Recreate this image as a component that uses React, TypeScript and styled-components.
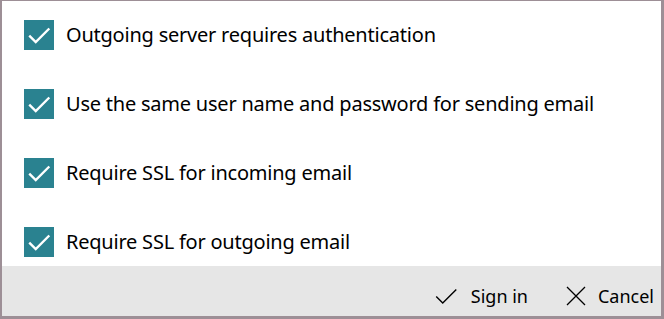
import React from "react"
import styled, { createGlobalStyle } from "styled-components"

const Global = createGlobalStyle`
    html, body {
        margin: 0;
        padding: 0;
        background: #fff;
    }
    body {
        font-family: "Segoe UI", "Noto Sans", "Open Sans", sans-serif;
    }
`

const Frame = styled.div`
    box-sizing: border-box;
    width: 664px;
    height: 319px;
    border-style: solid;
    border-color: #9d8f96;
    border-width: 1px 3px 3px 2px;
    display: flex;
    flex-direction: column;
    background: #fff;
`

const Options = styled.div`
    flex: 1;
    display: flex;
    flex-direction: column;
    padding: 19px 0 0 22px;
    gap: 39px;
`

const Row = styled.label`
    display: flex;
    align-items: center;
    gap: 12px;
    height: 30px;
    color: #000;
    font-size: 20px;
    letter-spacing: -0.22px;
`

const Text = styled.span`
    margin-top: -2px;
`

const Box = styled.span`
    width: 30px;
    height: 30px;
    background: #2a8290;
    display: flex;
    align-items: center;
    justify-content: center;
`

const Footer = styled.div`
    height: 50px;
    background: #e6e6e6;
    display: flex;
    align-items: center;
    justify-content: flex-end;
    padding: 0 7px 0 0;
    gap: 38px;
`

const Action = styled.button`
    appearance: none;
    border: 0;
    background: transparent;
    padding: 0;
    display: flex;
    align-items: center;
    gap: 12px;
    font-family: inherit;
    font-size: 18px;
    color: #000;
    cursor: pointer;
    margin-top: 9px;
`

const Tick = ({ color, size, weight }: { color: string; size: number; weight: number }) => (
    <svg width={size} height={size} viewBox="0 0 24 24" fill="none">
        <path d="M3 12.5 L9 18.5 L21.5 6" stroke={color} strokeWidth={weight} />
    </svg>
)

const Cross = () => (
    <svg width={20} height={20} viewBox="0 0 20 20" fill="none">
        <path d="M1 1 L19 19 M19 1 L1 19" stroke="#000" strokeWidth={1.3} />
    </svg>
)

const items = [
    "Outgoing server requires authentication",
    "Use the same user name and password for sending email",
    "Require SSL for incoming email",
    "Require SSL for outgoing email",
]

const App = () => (
    <>
        <Global />
        <Frame>
            <Options>
                {items.map((t) => (
                    <Row key={t}>
                        <Box>
                            <Tick color="#fff" size={26} weight={2.2} />
                        </Box>
                        <Text>{t}</Text>
                    </Row>
                ))}
            </Options>
            <Footer>
                <Action>
                    <Tick color="#000" size={26} weight={1.3} />
                    Sign in
                </Action>
                <Action>
                    <Cross />
                    Cancel
                </Action>
            </Footer>
        </Frame>
    </>
)

export default App
